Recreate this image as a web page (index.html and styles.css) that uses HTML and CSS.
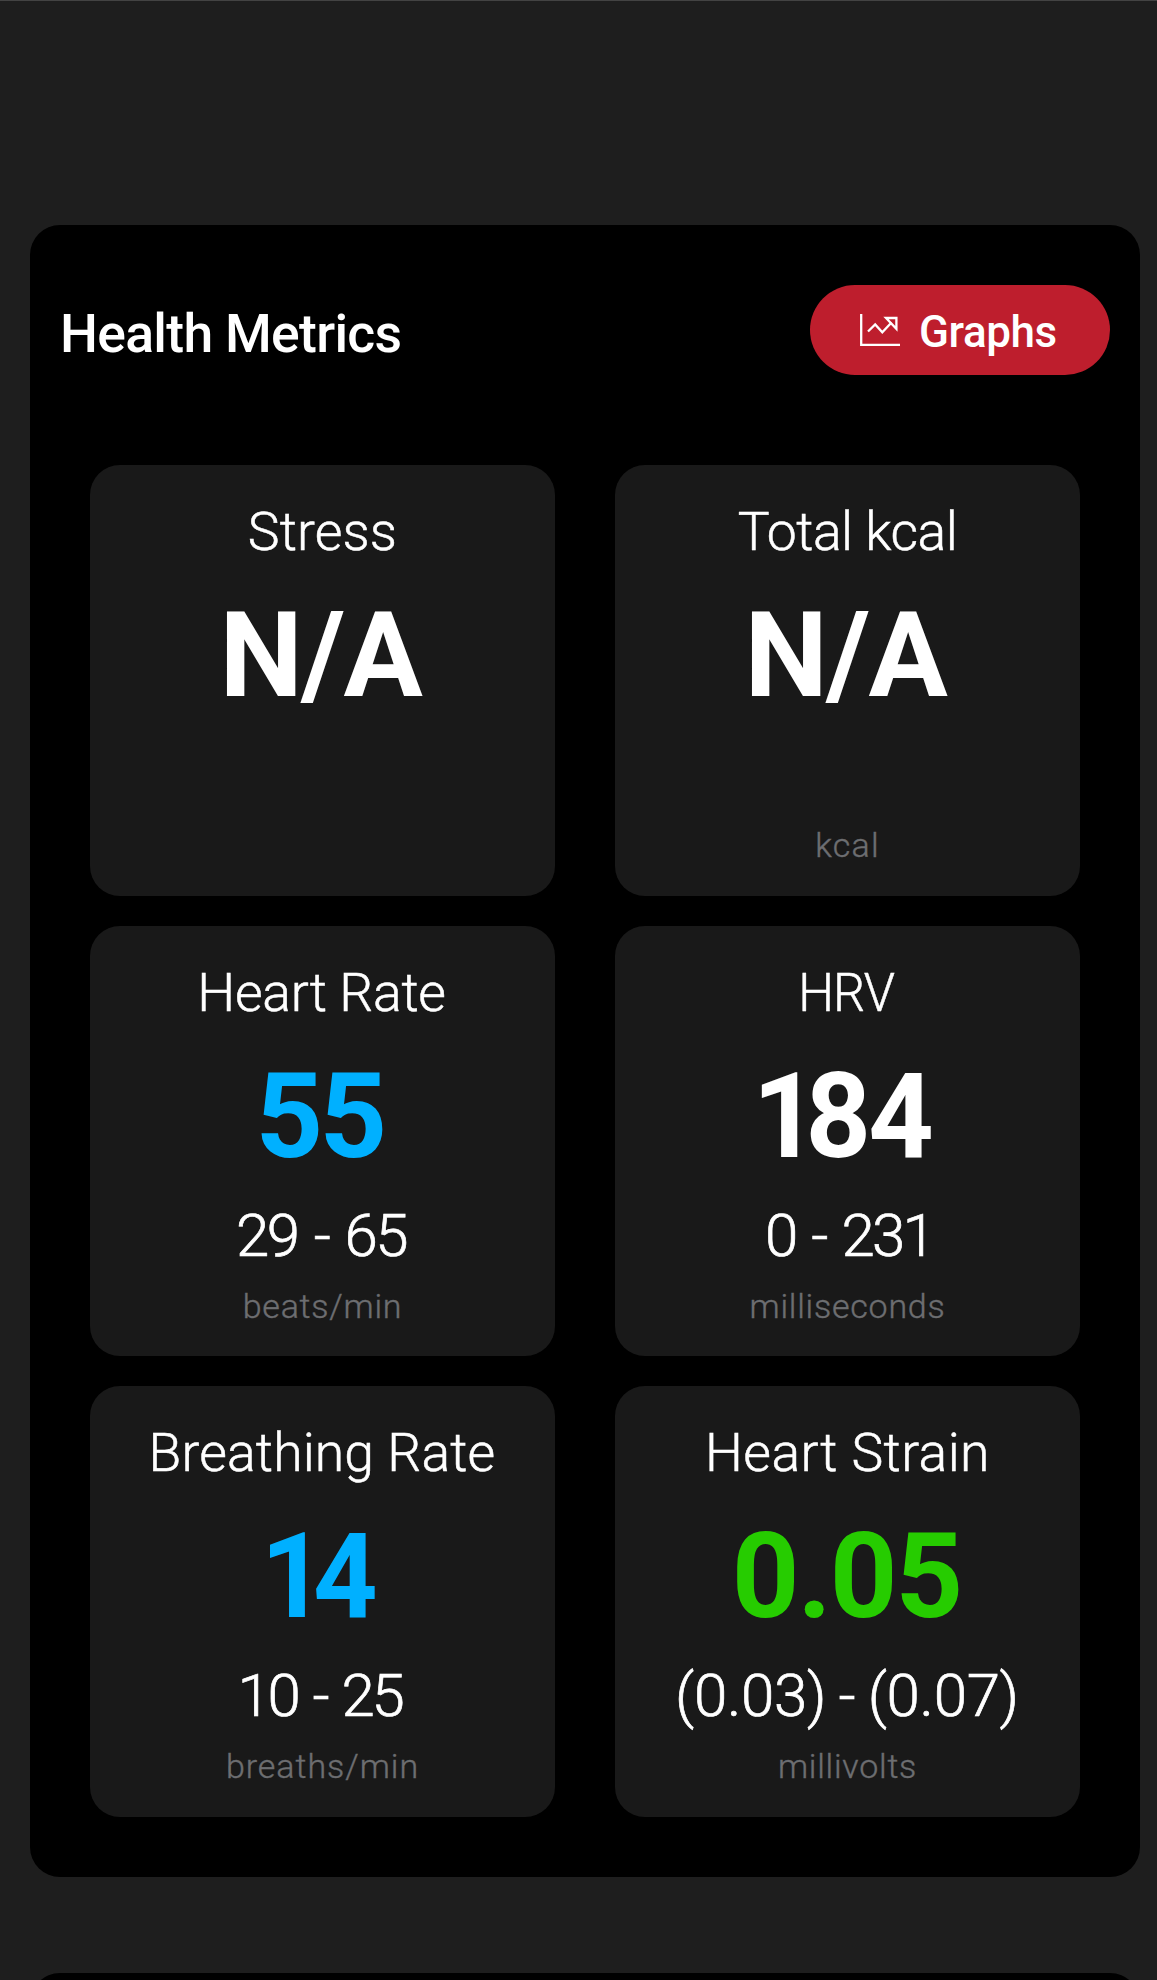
FILE: index.html
```html
<!DOCTYPE html>
<html lang="en">
<head>
<meta charset="utf-8">
<title>Health Metrics</title>
<link rel="stylesheet" href="styles.css">
</head>
<body>
<main class="page">
  <section class="panel">
    <header class="panel-header">
      <h1 class="panel-title">Health Metrics</h1>
      <button class="graphs-button" type="button">
        <svg class="graphs-icon" width="40" height="32" viewBox="0 0 40 32" fill="none" stroke="#fff" stroke-width="2.3">
          <path d="M1.2 0V30.8H40"/>
          <path d="M8 17.5L15.2 10.5L22.3 18.2L31.5 8.5"/>
          <path d="M26 4H36.4V14.8Z"/>
        </svg>
        <span class="graphs-label">Graphs</span>
      </button>
    </header>
    <div class="metrics">
      <article class="metric">
        <h2 class="label label-stress">Stress</h2>
        <div class="value value-na">N/A</div>
        <div class="range"></div>
        <div class="unit"></div>
      </article>
      <article class="metric">
        <h2 class="label label-kcal">Total kcal</h2>
        <div class="value value-na">N/A</div>
        <div class="range"></div>
        <div class="unit unit-kcal">kcal</div>
      </article>
      <article class="metric">
        <h2 class="label label-heart">Heart Rate</h2>
        <div class="value value-heart blue">55</div>
        <div class="range range-heart">29 - 65</div>
        <div class="unit">beats/min</div>
      </article>
      <article class="metric">
        <h2 class="label label-hrv">HRV</h2>
        <div class="value value-hrv"><span class="one">1</span>84</div>
        <div class="range range-hrv">0 - 231</div>
        <div class="unit">milliseconds</div>
      </article>
      <article class="metric">
        <h2 class="label label-breath">Breathing Rate</h2>
        <div class="value value-breath blue"><span class="one">1</span>4</div>
        <div class="range range-breath">10 - 25</div>
        <div class="unit unit-breath">breaths/min</div>
      </article>
      <article class="metric">
        <h2 class="label label-strain">Heart Strain</h2>
        <div class="value value-strain green">0.05</div>
        <div class="range range-strain">(0.03) - (0.07)</div>
        <div class="unit">millivolts</div>
      </article>
    </div>
  </section>
  <section class="panel panel-next"></section>
</main>
</body>
</html>
```
FILE: styles.css
```css
* { box-sizing: border-box; }
html { background: #1e1e1e; }
body {
  margin: 0;
  background: #1e1e1e;
  color: #fff;
  font-family: Roboto, "Liberation Sans", sans-serif;
}
.page {
  height: 1980px;
  overflow: hidden;
  padding: 224px 17px 0 30px;
  border-top: 1px solid #434343;
}
.panel {
  height: 1652px;
  padding: 60px 30px;
  background: #000;
  border-radius: 30px;
}
.panel-next { margin-top: 96px; }
.panel-header {
  display: flex;
  justify-content: space-between;
  height: 90px;
}
.panel-title {
  margin: 4px 0 0;
  font-size: 53.5px;
  font-weight: 500;
  line-height: 90px;
  letter-spacing: -0.7px;
}
.graphs-button {
  display: flex;
  align-items: center;
  gap: 19px;
  width: 300px;
  height: 90px;
  padding: 0 0 0 50px;
  border: 0;
  border-radius: 45px;
  background: #be1e2d;
  color: #fff;
  font-family: inherit;
}
.graphs-icon { flex: none; }
.graphs-label {
  padding-top: 4px;
  font-size: 44px;
  font-weight: 500;
  line-height: 60px;
  letter-spacing: -0.43px;
}

.metrics {
  display: grid;
  grid-template-columns: 465px 465px;
  grid-template-rows: repeat(3, 1fr);
  column-gap: 60px;
  row-gap: 30px;
  height: 1352px;
  margin: 90px 0 0 30px;
}
.metric {
  padding-top: 35px;
  background: #191919;
  border-radius: 30px;
  text-align: center;
  white-space: nowrap;
}
.label {
  height: 64px;
  margin: 0;
  font-size: 53.5px;
  font-weight: 300;
  line-height: 64px;
  -webkit-text-stroke: 0.5px currentColor;
}
.value {
  height: 120px;
  margin-top: 32px;
  font-size: 118px;
  font-weight: 700;
  line-height: 120px;
}
.range {
  height: 72px;
  margin-top: 23px;
  font-size: 60px;
  font-weight: 300;
  line-height: 72px;
  -webkit-text-stroke: 0.7px currentColor;
}
.unit {
  height: 40px;
  margin-top: 14px;
  color: #6d6e71;
  font-size: 34px;
  font-weight: 300;
  line-height: 40px;
  letter-spacing: 0.75px;
  -webkit-text-stroke: 0.4px currentColor;
}
.blue { color: #00b0ff; }
.green { color: #26cc00; }

.label-stress { letter-spacing: 0.15px; }
.label-kcal { letter-spacing: -0.48px; }
.label-heart { letter-spacing: -0.3px; text-indent: -2px; }
.label-hrv { letter-spacing: -1px; text-indent: -3px; transform: scaleX(0.945); }
.label-breath { letter-spacing: 0.13px; text-indent: -1px; }
.label-strain { letter-spacing: 0.42px; }
.value-na { letter-spacing: -1.5px; text-indent: -4px; }
.value-heart { letter-spacing: -3.7px; text-indent: -6px; }
.value-hrv { letter-spacing: -3px; text-indent: -12px; transform: scaleX(0.968); }
.value-breath { text-indent: -7px; transform: scaleX(0.955); }
.value-strain { letter-spacing: -1.9px; text-indent: -2px; }
.one { letter-spacing: -13px; }
.range-heart { letter-spacing: -2.5px; word-spacing: 4px; text-indent: -3px; }
.range-hrv { letter-spacing: -2.8px; word-spacing: 4px; text-indent: 3px; }
.range-breath { letter-spacing: -3.2px; word-spacing: 3.5px; text-indent: -6px; }
.range-strain { letter-spacing: -0.3px; word-spacing: -2px; text-indent: -1px; }
.unit-kcal { letter-spacing: 1.2px; }
.unit-breath { letter-spacing: 0.95px; }
```
